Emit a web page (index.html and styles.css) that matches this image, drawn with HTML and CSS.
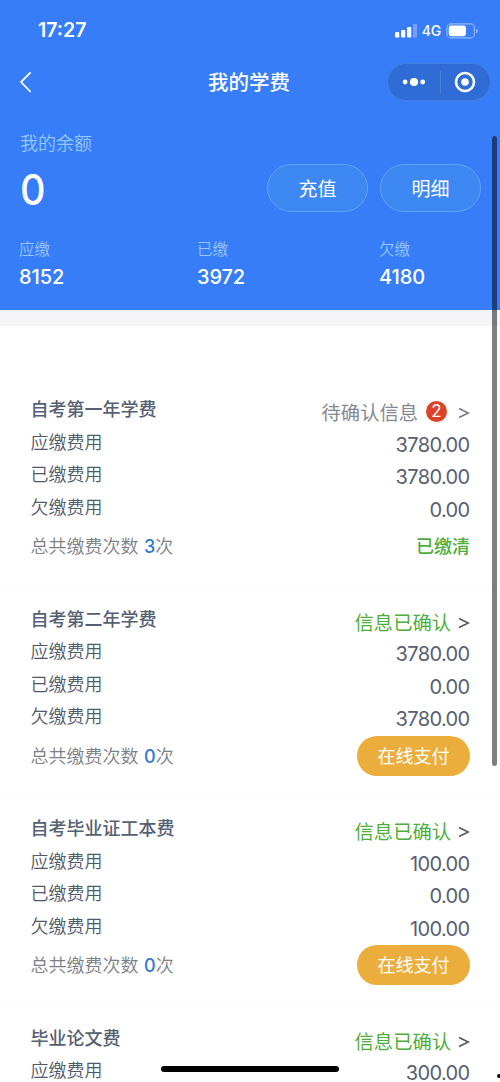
FILE: index.html
```html
<!DOCTYPE html>
<html lang="zh-CN">
<head>
<meta charset="utf-8">
<meta name="viewport" content="width=device-width, initial-scale=1">
<title>我的学费</title>
<link rel="stylesheet" href="styles.css">
</head>
<body>
<div class="screen">
  <header class="hero">
    <div class="status">
      <span class="time">17:27</span>
      <div class="status-icons">
        <svg class="signal" width="24" height="16" viewBox="0 0 24 16" fill="#fff"><rect x="1" y="9" width="4.3" height="5.5" rx="1"/><rect x="7" y="7" width="4.3" height="7.5" rx="1"/><rect x="13" y="4" width="4.3" height="10.5" rx="1"/><rect x="19" y="1" width="4" height="13.5" rx="1" opacity=".3"/></svg>
        <span class="network">4G</span>
        <svg class="battery" width="33" height="16" viewBox="0 0 33 16"><rect x=".9" y=".9" width="27.6" height="14" rx="4" fill="none" stroke="#fff" stroke-opacity=".45" stroke-width="1.1"/><rect x="2.7" y="2.6" width="17.3" height="10.6" rx="2.4" fill="#fff"/><path d="M30.3 5.5Q33.6 8 30.3 10.4Z" fill="#fff" opacity=".5"/></svg>
      </div>
    </div>
    <nav class="navbar">
      <svg class="back" width="14" height="22" viewBox="0 0 14 22" fill="none" stroke="#fff" stroke-width="1.7"><path d="M11.6 1.4 2 11.1l9.6 9.7"/></svg>
      <h1 class="page-title">我的学费</h1>
      <div class="capsule">
        <svg width="24" height="10" viewBox="0 0 24 10" fill="#fff"><circle cx="3.1" cy="5" r="2.4"/><circle cx="12" cy="5" r="4.1"/><circle cx="20.7" cy="5" r="2.4"/></svg>
        <i class="capsule-line"></i>
        <svg width="22" height="22" viewBox="0 0 22 22"><circle cx="11" cy="11" r="9" fill="none" stroke="#fff" stroke-width="2.6"/><circle cx="11" cy="11" r="3.8" fill="#fff"/></svg>
      </div>
    </nav>
    <section class="balance">
      <div>
        <div class="balance-label">我的余额</div>
        <div class="balance-value">0</div>
      </div>
      <div class="actions"><button class="ghost">充值</button><button class="ghost">明细</button></div>
    </section>
    <section class="totals">
      <div><div class="total-label">应缴</div><div class="total-value">8152</div></div>
      <div><div class="total-label">已缴</div><div class="total-value">3972</div></div>
      <div><div class="total-label">欠缴</div><div class="total-value">4180</div></div>
    </section>
  </header>
  <div class="band"></div>
  <main class="fees">
    <article class="fee">
      <div class="names"><h2>自考第一年学费</h2><p>应缴费用</p><p>已缴费用</p><p>欠缴费用</p><div class="count">总共缴费次数 <b>3</b>次</div></div>
      <div class="values"><div class="state pending"><span>待确认信息</span><em class="badge">2</em><svg class="more" width="12" height="12" viewBox="0 0 12 12"><path d="M1 1.5 10.3 6 1 10.5"/></svg></div><p>3780.00</p><p>3780.00</p><p>0.00</p><div class="paid">已缴清</div></div>
    </article>
    <article class="fee">
      <div class="names"><h2>自考第二年学费</h2><p>应缴费用</p><p>已缴费用</p><p>欠缴费用</p><div class="count">总共缴费次数 <b>0</b>次</div></div>
      <div class="values"><div class="state"><span>信息已确认</span><svg class="more" width="12" height="12" viewBox="0 0 12 12"><path d="M1 1.5 10.3 6 1 10.5"/></svg></div><p>3780.00</p><p>0.00</p><p>3780.00</p><button class="pay">在线支付</button></div>
    </article>
    <article class="fee">
      <div class="names"><h2>自考毕业证工本费</h2><p>应缴费用</p><p>已缴费用</p><p>欠缴费用</p><div class="count">总共缴费次数 <b>0</b>次</div></div>
      <div class="values"><div class="state"><span>信息已确认</span><svg class="more" width="12" height="12" viewBox="0 0 12 12"><path d="M1 1.5 10.3 6 1 10.5"/></svg></div><p>100.00</p><p>0.00</p><p>100.00</p><button class="pay">在线支付</button></div>
    </article>
    <article class="fee">
      <div class="names"><h2>毕业论文费</h2><p>应缴费用</p></div>
      <div class="values"><div class="state"><span>信息已确认</span><svg class="more" width="12" height="12" viewBox="0 0 12 12"><path d="M1 1.5 10.3 6 1 10.5"/></svg></div><p>300.00</p></div>
    </article>
  </main>
  <div class="scrollbar"></div>
  <div class="home-indicator"></div>
  <div class="edge-dot"></div>
</div>
</body>
</html>
```
FILE: styles.css
```css
* { box-sizing: border-box; }
body, h1, h2, p { margin: 0; }
body { font-family: Inter, "Noto Sans CJK SC", sans-serif; background: #fff; }
button { font: inherit; padding: 0; border: 0; }
svg { display: block; flex: none; }
.screen { position: relative; width: 500px; height: 1082px; overflow: hidden; background: #fff; }

.hero { height: 310px; background: #377df7; color: #fff; }
.status { display: flex; justify-content: space-between; height: 56px; padding: 18px 20px 0 38px; }
.time { font-size: 19.5px; font-weight: 600; line-height: 25px; letter-spacing: 0; }
.status-icons { display: flex; align-items: center; height: 25px; margin-right: 1px; }
.network { margin: 0 5px 0 4px; font-size: 14px; font-weight: 500; letter-spacing: -.2px; }

.navbar { display: grid; grid-template-columns: 1fr auto 1fr; align-items: center; height: 52px; padding: 0 9px 0 19px; }
.page-title { font-size: 20.5px; font-weight: 500; line-height: 30px; padding: 1px 12px 0 0; }
.capsule { justify-self: end; display: flex; align-items: center; justify-content: space-between; width: 104px; height: 38px; padding: 0 14px; border: 1px solid #4480e4; border-radius: 19px; background: #2f6cd5; }
.capsule-line { width: 1px; height: 22px; background: #4a80dc; }

.balance { display: flex; justify-content: space-between; height: 130px; padding: 22px 19px 0 20px; }
.balance-label { padding-top: 1px; font-size: 18px; line-height: 26px; font-weight: 350; color: #98c8fb; }
.balance-value { font-size: 43px; font-weight: 500; line-height: 50px; padding-top: 7px; transform: scaleX(.92); transform-origin: left; }
.actions { display: flex; gap: 12px; padding-top: 34px; }
.ghost { width: 101px; height: 48px; padding-bottom: 2px; border: 1px solid #62a3f8; border-radius: 24px; background: #3e88f3; color: #fff; font-size: 19px; }
.totals { display: grid; grid-template-columns: 178px 182px 1fr; padding: 1px 0 0 19px; }
.total-label { font-size: 15.5px; line-height: 22px; font-weight: 350; color: #98c8fb; }
.total-value { font-size: 20px; font-weight: 500; line-height: 32px; letter-spacing: -.1px; }

.band { height: 16px; background: #f5f5f7; }
.fees { padding-top: 50px; }
.fee { display: flex; justify-content: space-between; height: 209.5px; padding: 18px 30px 0; border-bottom: 1px solid #fafafb; color: #566073; }
.names h2, .names p { font-size: 18px; line-height: 32.6px; }
.names h2 { font-weight: 500; color: #566073; }
.names p { font-weight: 350; color: #505a6b; }
.names { padding-left: .5px; }
.count { padding-top: 9px; font-size: 18px; font-weight: 350; line-height: 28px; color: #7c8087; }
.count b { margin-left: .5px; font-weight: 500; color: #3379d2; }
.values { display: flex; flex-direction: column; align-items: flex-end; padding-top: 2px; }
.values p { font-size: 20px; line-height: 32.6px; letter-spacing: -.62px; margin-right: .4px; }
.state { display: flex; align-items: center; height: 32.6px; font-size: 19.3px; color: #4eae3b; }
.pending { color: #85888f; }
.badge { width: 21px; height: 21px; margin: -2px 4px 0 8px; border-radius: 50%; background: #dd4126; color: #fff; font-size: 17px; font-style: normal; font-weight: 400; line-height: 21px; text-align: center; }
.more { margin: 2px 0 0 7px; fill: none; stroke: #51555c; stroke-width: 1.6; }
.pending .more { stroke: #777a80; }
.paid { padding-top: 7px; font-size: 18px; font-weight: 500; line-height: 28px; color: #4eae3b; }
.pay { width: 113px; height: 40px; margin-top: 0; padding-bottom: 2px; border-radius: 20px; background: #ebae3d; color: #fff; font-size: 18px; }

.scrollbar { position: absolute; left: 492px; top: 136px; width: 5px; height: 630px; border-radius: 3px; background: rgba(0, 0, 0, .5); }
.home-indicator { position: absolute; left: 161px; top: 1066px; width: 178px; height: 6px; border-radius: 3px; background: #000; }
.edge-dot { position: absolute; left: 497px; top: 1074px; width: 3px; height: 4px; border-radius: 2px 0 0 2px; background: #111; }
```
